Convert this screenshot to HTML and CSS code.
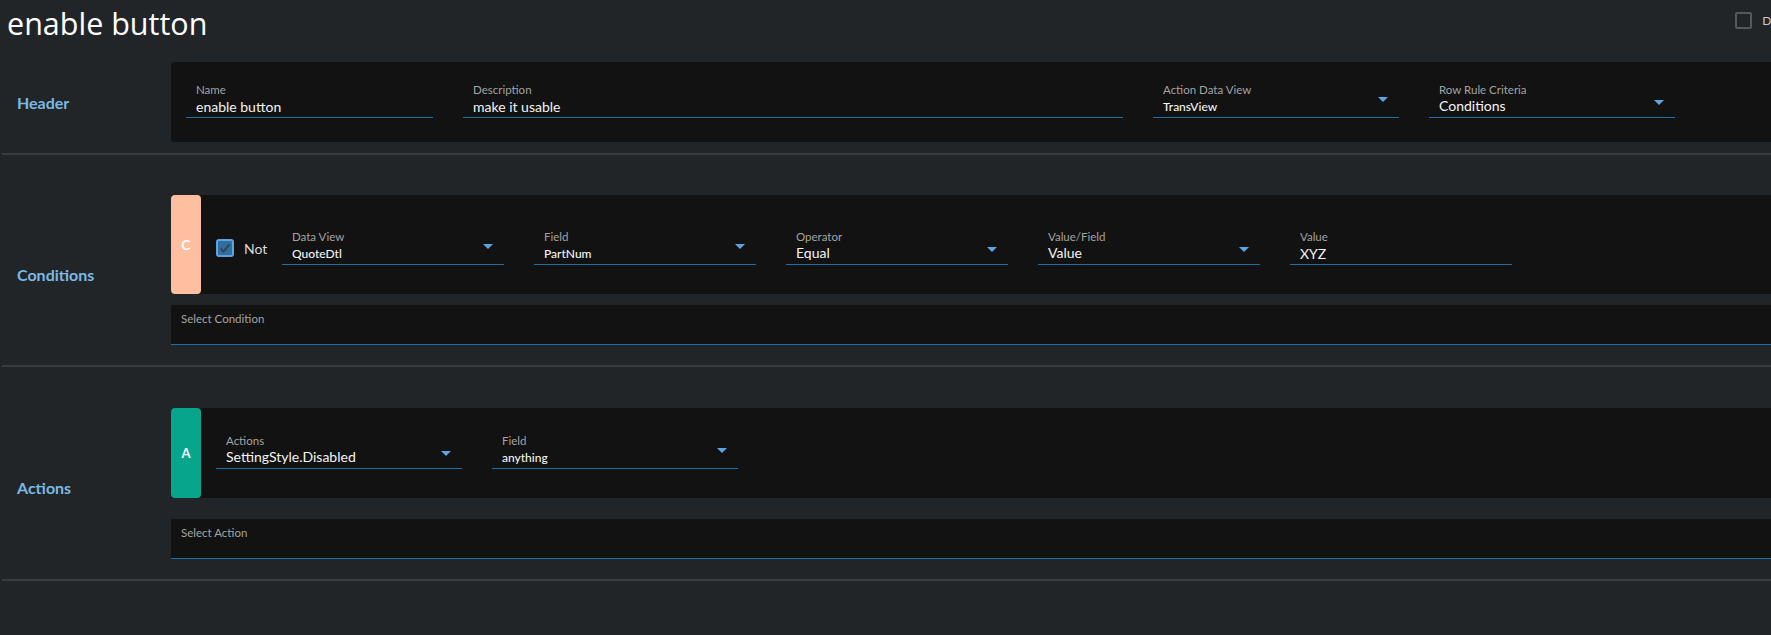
FILE: index.html
```html
<!DOCTYPE html>
<html lang="en">
<head>
<meta charset="utf-8">
<title>enable button</title>
<link rel="stylesheet" href="styles.css">
</head>
<body>
<div class="page">
  <div class="topbar">
    <h1 class="title">enable button</h1>
    <div class="top-check"><span class="top-box"></span><span class="top-check-text">Disabled</span></div>
  </div>

  <section class="section sec-header">
    <div class="section-label">Header</div>
    <div class="section-body">
      <div class="panel header-panel">
        <div class="field w-name">
          <div class="f-label">Name</div>
          <div class="f-value lg">enable button</div>
        </div>
        <div class="field w-desc">
          <div class="f-label">Description</div>
          <div class="f-value lg">make it usable</div>
        </div>
        <div class="field w-246">
          <div class="f-label">Action Data View</div>
          <div class="f-value sm">TransView</div>
          <span class="arrow arrow-sm"></span>
        </div>
        <div class="field w-246">
          <div class="f-label">Row Rule Criteria</div>
          <div class="f-value lg dd">Conditions</div>
          <span class="arrow arrow-lg"></span>
        </div>
      </div>
    </div>
  </section>

  <section class="section sec-cond">
    <div class="section-label">Conditions</div>
    <div class="section-body">
      <div class="panel row-panel cond-panel">
        <div class="tag tag-c">C</div>
        <div class="row-content cond-content">
          <div class="not-group">
            <svg class="not-box" width="18" height="18" viewBox="0 0 18 18">
              <rect x="1" y="1" width="16" height="16" rx="2" fill="#2c6ea6" stroke="#5fa2dc" stroke-width="2"/>
              <polyline points="4.5,9.5 7.5,12.5 13.5,5.5" fill="none" stroke="#3f4347" stroke-width="2"/>
            </svg>
            <span class="not-text">Not</span>
          </div>
          <div class="field w-222">
            <div class="f-label">Data View</div>
            <div class="f-value sm">QuoteDtl</div>
            <span class="arrow arrow-sm"></span>
          </div>
          <div class="field w-222">
            <div class="f-label">Field</div>
            <div class="f-value sm">PartNum</div>
            <span class="arrow arrow-sm"></span>
          </div>
          <div class="field w-222">
            <div class="f-label">Operator</div>
            <div class="f-value lg dd">Equal</div>
            <span class="arrow arrow-lg"></span>
          </div>
          <div class="field w-222">
            <div class="f-label">Value/Field</div>
            <div class="f-value lg dd">Value</div>
            <span class="arrow arrow-lg"></span>
          </div>
          <div class="field w-222">
            <div class="f-label">Value</div>
            <div class="f-value lg">XYZ</div>
          </div>
        </div>
      </div>
      <div class="select-box cond-select">
        <div class="select-label">Select Condition</div>
      </div>
    </div>
  </section>

  <section class="section sec-act">
    <div class="section-label">Actions</div>
    <div class="section-body">
      <div class="panel row-panel act-panel">
        <div class="tag tag-a">A</div>
        <div class="row-content act-content">
          <div class="field w-246">
            <div class="f-label">Actions</div>
            <div class="f-value lg dd">SettingStyle.Disabled</div>
            <span class="arrow arrow-lg"></span>
          </div>
          <div class="field w-246">
            <div class="f-label">Field</div>
            <div class="f-value sm">anything</div>
            <span class="arrow arrow-sm"></span>
          </div>
        </div>
      </div>
      <div class="select-box act-select">
        <div class="select-label">Select Action</div>
      </div>
    </div>
  </section>
</div>
</body>
</html>
```

FILE: styles.css
```css
* {
  box-sizing: border-box;
}

html,
body {
  margin: 0;
  padding: 0;
  overflow: hidden;
  background: #222528;
}

body {
  font-family: Lato, "Noto Sans", sans-serif;
  color: #f2f2f2;
}

.page {
  width: 1840px;
  min-height: 635px;
  background: #222528;
}

/* ---------- top bar ---------- */
.topbar {
  height: 54px;
  display: flex;
  justify-content: space-between;
  align-items: flex-start;
  padding: 5px 0 0 7px;
}

.title {
  margin: 0;
  font-family: "Open Sans", Lato, sans-serif;
  font-weight: 400;
  font-size: 30.5px;
  line-height: 36px;
  color: #ffffff;
}

.top-check {
  display: flex;
  align-items: center;
  gap: 10px;
  margin-top: 7px;
  margin-right: 32px;
}

.top-box {
  width: 17px;
  height: 17px;
  border: 2px solid #56595c;
  border-radius: 2px;
}

.top-check-text {
  font-size: 12px;
  color: #c8c8c8;
}

/* ---------- sections ---------- */
.section {
  display: flex;
  margin-left: 2px;
  border-bottom: 2px solid #393c3f;
}

.section-label {
  width: 169px;
  flex: none;
  padding-left: 15px;
  display: flex;
  align-items: center;
  font-size: 16px;
  font-weight: 700;
  color: #7ab9e3;
}

.section-body {
  flex: 1;
}

.sec-header {
  padding: 8px 0 11px;
}

.sec-cond {
  padding: 40px 0 20px;
}

.sec-cond .section-label {
  padding-top: 8px;
}

.sec-act {
  padding: 41px 0 20px;
}

.sec-act .section-label {
  padding-top: 8px;
}

/* ---------- panels ---------- */
.panel {
  background: #121212;
  border-radius: 3px;
}

.header-panel {
  height: 80px;
  display: flex;
  align-items: flex-start;
  gap: 30px;
  padding: 20px 0 0 15px;
}

.row-panel {
  display: flex;
}

.cond-panel {
  height: 99px;
}

.act-panel {
  height: 90px;
}

.tag {
  width: 30px;
  flex: none;
  border-radius: 4px;
  display: flex;
  align-items: center;
  justify-content: center;
  font-size: 14px;
  font-weight: 700;
  color: #ffffff;
}

.tag-c {
  background: #fdbf9f;
}

.tag-a {
  background: #07a58c;
  font-size: 13px;
}

.row-content {
  display: flex;
  align-items: flex-start;
  gap: 30px;
  padding-left: 15px;
}

.cond-content {
  padding-top: 34px;
}

.act-content {
  padding-top: 25px;
}

.not-group {
  width: 66px;
  margin-right: -30px;
  margin-top: 8px;
  display: flex;
  align-items: center;
}

.not-box {
  flex: none;
  display: block;
}

.not-text {
  margin-left: 10px;
  font-size: 14px;
  line-height: 18px;
  padding-top: 3px;
  color: #dcdcdc;
}

/* ---------- fields ---------- */
.field {
  position: relative;
  flex: none;
  border-bottom: 1px solid #1f6fa5;
  padding-left: 10px;
}

.w-name {
  width: 247px;
}

.w-desc {
  width: 660px;
}

.w-246 {
  width: 246px;
}

.w-222 {
  width: 222px;
}

.f-label {
  font-size: 11.5px;
  line-height: 15px;
  color: #a3a3a3;
}

.f-value {
  height: 20px;
  line-height: 20px;
  color: #f4f4f4;
  white-space: nowrap;
}

.f-value.lg {
  font-size: 14px;
}

.f-value.sm {
  font-size: 12px;
  font-weight: 500;
}

.f-value.dd {
  line-height: 17px;
}

.arrow {
  position: absolute;
  right: 11px;
  width: 0;
  height: 0;
  border-left: 5px solid transparent;
  border-right: 5px solid transparent;
  border-top: 5px solid #5aa5e6;
}

.arrow-sm {
  bottom: 15px;
}

.arrow-lg {
  bottom: 12px;
}

/* ---------- select boxes ---------- */
.select-box {
  height: 40px;
  background: #121212;
  border-bottom: 1px solid #1f6fa5;
  padding: 6px 0 0 10px;
}

.cond-select {
  margin-top: 11px;
}

.act-select {
  margin-top: 21px;
}

.select-label {
  font-size: 11.5px;
  line-height: 15px;
  color: #a3a3a3;
}
```
